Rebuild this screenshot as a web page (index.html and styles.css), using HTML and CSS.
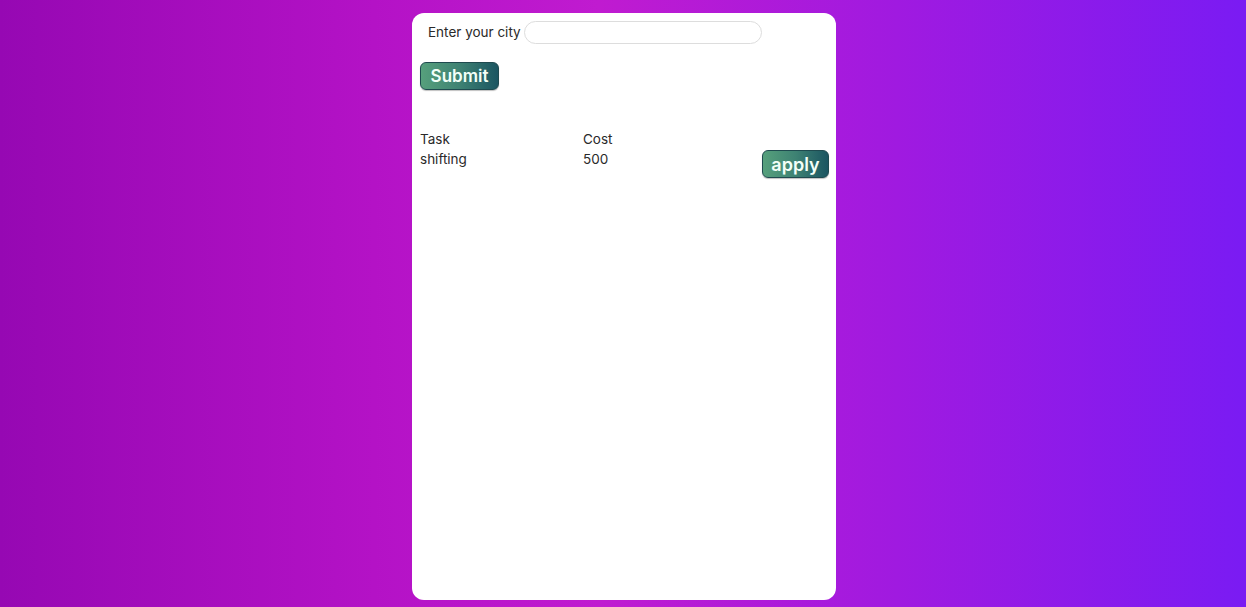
FILE: index.html
```html
<!DOCTYPE html>
<html>
<head>
<meta charset="utf-8">
<link rel="stylesheet" href="styles.css">
</head>
<body>
<div class="card">
  <div class="city-row">
    <label class="city-label">Enter your city</label>
    <input class="city-input" type="text">
  </div>
  <button class="btn submit">Submit</button>
  <div class="tasks">
    <div class="task-row head">
      <span class="c-task">Task</span>
      <span class="c-cost">Cost</span>
    </div>
    <div class="task-row">
      <span class="c-task">shifting</span>
      <span class="c-cost">500</span>
      <button class="btn apply">apply</button>
    </div>
  </div>
</div>
</body>
</html>
```
FILE: styles.css
```css
html, body { margin: 0; padding: 0; }
body {
  width: 1246px;
  height: 607px;
  overflow: hidden;
  background: linear-gradient(90deg, #9608b3 0%, #b412c6 30%, #c01bd0 48%, #a01ae0 72%, #7a1bf3 100%);
  font-family: "Inter", "Noto Sans", sans-serif;
  color: #2a2a2a;
}
.card {
  box-sizing: border-box;
  width: 424px;
  height: 587px;
  margin: 13px 0 0 412px;
  background: #fff;
  border-radius: 12px;
  padding: 7px 7px 0 8px;
}
.city-row {
  display: flex;
  align-items: center;
  padding-left: 8px;
  height: 24px;
}
.city-label {
  font-size: 13.5px;
  margin-right: 3px;
}
.city-input {
  box-sizing: border-box;
  width: 238px;
  height: 23px;
  border: 1px solid #ddd;
  border-radius: 12px;
  outline: none;
  padding: 0 8px;
}
.btn {
  box-sizing: border-box;
  border: 1px solid #1f4a4f;
  border-radius: 6px;
  background: linear-gradient(90deg, #56a07c 0%, #3e8273 50%, #1b5561 100%);
  color: #f3fff8;
  font-family: "Inter", "Noto Sans", sans-serif;
  font-weight: 600;
  padding: 0;
  box-shadow: 0 1px 1px rgba(0,0,0,0.25);
}
.submit {
  display: block;
  margin-top: 18px;
  width: 79px;
  height: 28px;
  font-size: 17px;
}
.tasks {
  margin-top: 41px;
}
.task-row {
  display: flex;
  align-items: flex-start;
  font-size: 13.5px;
  height: 20px;
}
.c-task { width: 163px; }
.c-cost { flex: 1; }
.apply {
  width: 67px;
  height: 28px;
  font-size: 18px;
  margin-top: -1px;
}
```
